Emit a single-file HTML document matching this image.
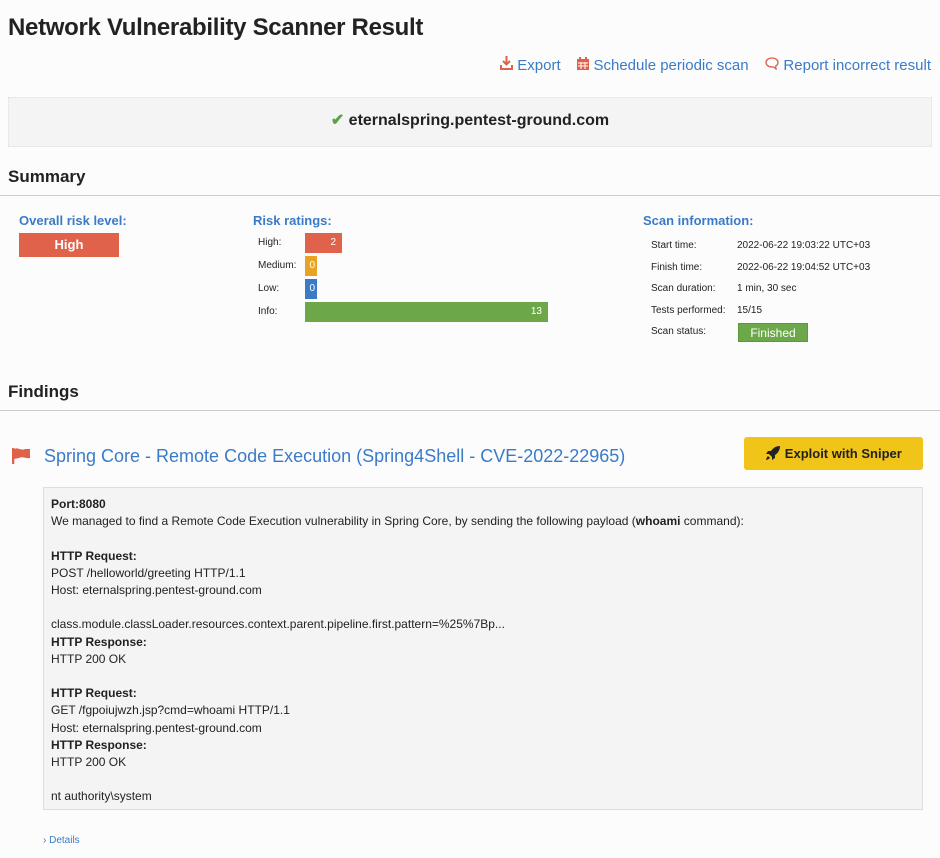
<!DOCTYPE html>
<html><head><meta charset="utf-8"><style>
body{margin:0;background:#fcfcfc;font-family:"Liberation Sans",sans-serif;color:#222;width:940px;height:858px;position:relative;overflow:hidden}
.a{position:absolute;white-space:nowrap}
.blue{color:#3a7bc8}
h1{position:absolute;left:8px;top:14px;margin:0;font-size:24px;font-weight:bold;letter-spacing:-0.3px}
.hr{position:absolute;left:0;width:940px;height:1px;background:#ccc}
.lbl{font-size:10px;color:#222}
.bar{position:absolute;height:20px;color:#fff;font-size:10px;text-align:right;line-height:20px;box-sizing:border-box;padding-right:6px}
.body{position:absolute;left:43px;top:487px;width:880px;height:323px;background:#f4f4f4;border:1px solid #ddd;box-sizing:border-box;padding:8px 7px;font-size:12px;line-height:17.2px}
</style></head><body>
<h1>Network Vulnerability Scanner Result</h1>
<div class="a blue" style="right:9px;top:56px;font-size:15px">
<svg width="13" height="14" viewBox="0 0 13 14"><path d="M6.5 0v8M3 5l3.5 3.5L10 5" stroke="#e0604a" stroke-width="2" fill="none"/><path d="M0 9v5h13V9h-2v3H2V9z" fill="#e0604a"/></svg> Export&nbsp;&nbsp;&nbsp;&nbsp;<svg width="12" height="13" viewBox="0 0 12 13"><rect x="0" y="2" width="12" height="11" fill="#e0604a"/><rect x="2" y="0" width="2" height="3" fill="#e0604a"/><rect x="8" y="0" width="2" height="3" fill="#e0604a"/><path d="M1 6h10M1 9h10M4 5v7M8 5v7" stroke="#fff" stroke-width="1"/></svg> Schedule periodic scan&nbsp;&nbsp;&nbsp;&nbsp;<svg width="14" height="13" viewBox="0 0 14 13"><path d="M7 1C3.5 1 1 3 1 5.5S3.5 10 7 10c.5 0 1 0 1.5-.1L11 12l-.3-3C12.2 8.2 13 7 13 5.5 13 3 10.5 1 7 1z" stroke="#e0604a" stroke-width="1.3" fill="none"/></svg> Report incorrect result</div>
<div class="a" style="left:8px;top:97px;width:924px;height:50px;background:#f4f4f4;border:1px dotted #ddd;box-sizing:border-box;text-align:center;line-height:46px;font-size:16px;font-weight:bold"><span style="color:#5aa142">&#10004;</span> eternalspring.pentest-ground.com</div>
<div class="a" style="left:8px;top:167px;font-size:17px;font-weight:bold">Summary</div>
<div class="hr" style="top:195px"></div>
<div class="a blue" style="left:19px;top:213px;font-size:13px;font-weight:bold">Overall risk level:</div>
<div class="a" style="left:19px;top:233px;width:100px;height:24px;background:#e0624a;color:#fff;font-weight:bold;font-size:13px;text-align:center;line-height:24px">High</div>
<div class="a blue" style="left:253px;top:213px;font-size:13px;font-weight:bold">Risk ratings:</div>
<div class="a lbl" style="left:258px;top:237px">High:</div>
<div class="a lbl" style="left:258px;top:260px">Medium:</div>
<div class="a lbl" style="left:258px;top:283px">Low:</div>
<div class="a lbl" style="left:258px;top:306px">Info:</div>
<div class="bar" style="left:305px;top:233px;width:37px;background:#e0624a">2</div>
<div class="bar" style="left:305px;top:256px;width:12px;background:#e8a320;padding-right:2px">0</div>
<div class="bar" style="left:305px;top:279px;width:12px;background:#3a7bc8;padding-right:2px">0</div>
<div class="bar" style="left:305px;top:302px;width:243px;background:#6ca84a">13</div>
<div class="a blue" style="left:643px;top:213px;font-size:13px;font-weight:bold">Scan information:</div>
<div class="a lbl" style="left:651px;top:235px;line-height:21.5px">Start time:<br>Finish time:<br>Scan duration:<br>Tests performed:<br>Scan status:</div>
<div class="a lbl" style="left:737px;top:235px;line-height:21.5px">2022-06-22 19:03:22 UTC+03<br>2022-06-22 19:04:52 UTC+03<br>1 min, 30 sec<br>15/15</div>
<div class="a" style="left:738px;top:323px;width:70px;height:19px;background:#6ca84a;color:#fff;font-size:12px;text-align:center;line-height:19px;border:1px solid #5a9a3a;box-sizing:border-box">Finished</div>
<div class="a" style="left:8px;top:382px;font-size:17px;font-weight:bold">Findings</div>
<div class="hr" style="top:410px"></div>
<svg class="a" style="left:12px;top:447px" width="20" height="18" viewBox="0 0 20 18"><path d="M1 1v16" stroke="#e0604a" stroke-width="2.5"/><path d="M2 2c4-2 7 2 11 0l5 0v9c-4 1-7-2-11 0l-5 1z" fill="#e0604a"/></svg>
<div class="a blue" style="left:44px;top:446px;font-size:18px">Spring Core - Remote Code Execution (Spring4Shell - CVE-2022-22965)</div>
<div class="a" style="left:744px;top:437px;width:179px;height:33px;background:#f0c419;border-radius:3px;font-size:13px;font-weight:bold;line-height:33px;text-align:center"><svg width="16" height="16" viewBox="0 0 16 16" style="vertical-align:-3px"><path d="M15 1c-4 0-7 2-9 5L3 6 1 9l3 0 3 3 0 3 3-2 0-3c3-2 5-5 5-9z" fill="#222"/><path d="M3 11c-1 1-2 3-2 4 1 0 3-1 4-2z" fill="#222"/></svg> Exploit with Sniper</div>
<div class="body"><b>Port:8080</b><br>We managed to find a Remote Code Execution vulnerability in Spring Core, by sending the following payload (<b>whoami</b> command):<br><br><b>HTTP Request:</b><br>POST /helloworld/greeting HTTP/1.1<br>Host: eternalspring.pentest-ground.com<br><br>class.module.classLoader.resources.context.parent.pipeline.first.pattern=%25%7Bp...<br><b>HTTP Response:</b><br>HTTP 200 OK<br><br><b>HTTP Request:</b><br>GET /fgpoiujwzh.jsp?cmd=whoami HTTP/1.1<br>Host: eternalspring.pentest-ground.com<br><b>HTTP Response:</b><br>HTTP 200 OK<br><br>nt authority\system</div>
<div class="a blue" style="left:43px;top:835px;font-size:10px">&#x203A; Details</div>
</body></html>
